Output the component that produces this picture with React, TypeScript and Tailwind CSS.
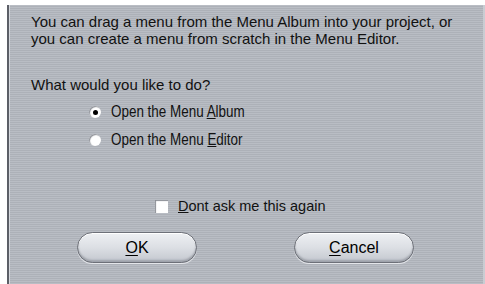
import React from "react";

const stripes =
  "bg-[repeating-linear-gradient(180deg,#b9bdc4_0px,#b9bdc4_1px,#adb1b8_1px,#adb1b8_2px)]";

const Radio: React.FC<{ checked?: boolean }> = ({ checked }) => (
  <span className="w-[12px] h-[12px] rounded-full bg-white shadow-[inset_1px_1px_1px_#8a8d94] flex items-center justify-center">
    {checked && <span className="w-[5px] h-[5px] rounded-full bg-black" />}
  </span>
);

const PillButton: React.FC<{ hot: string; rest: string }> = ({ hot, rest }) => (
  <button className="w-[120px] h-[31px] rounded-full border border-[#6d7078] bg-gradient-to-b from-[#eef0f3] via-[#dcdfe4] to-[#c3c7ce] shadow-[inset_0_1px_0_#ffffff,inset_0_-2px_2px_#9ea2aa,0_1px_0_#e4e6ea] text-[16px] text-black">
    <span className="underline underline-offset-2">{hot}</span>
    {rest}
  </button>
);

export default function App() {
  return (
    <div className="w-[485px] h-[284px] bg-white pt-[5px] pl-[7px] flex font-['Liberation_Sans',Arial,sans-serif]">
      <div
        className={`flex-1 border-l-2 border-[#5c5f67] shadow-[inset_1px_0_0_#d6d9de,inset_-2px_0_0_#c9ccd2] ${stripes} text-[15px] leading-[17px] text-[#111]`}
      >
        <div className="pl-[22px] pt-[8px]">
          <p>You can drag a menu from the Menu Album into your project, or</p>
          <p>you can create a menu from scratch in the Menu Editor.</p>
          <p className="mt-[29px]">What would you like to do?</p>
        </div>

        <div className="pl-[80px] mt-[10px] flex flex-col gap-[10px] text-[16px] leading-[18px]">
          <label className="flex items-center gap-[10px]">
            <Radio checked />
            <span className="inline-block origin-left scale-x-[0.84] whitespace-nowrap">
              Open the Menu <span className="underline">A</span>lbum
            </span>
          </label>
          <label className="flex items-center gap-[10px]">
            <Radio />
            <span className="inline-block origin-left scale-x-[0.84] whitespace-nowrap">
              Open the Menu <span className="underline">E</span>ditor
            </span>
          </label>
        </div>

        <label className="ml-[146px] mt-[49px] flex items-center gap-[10px] text-[14.5px] leading-[17px]">
          <span className="w-[13px] h-[13px] bg-white shadow-[inset_1px_1px_1px_#8a8d94]" />
          <span>
            <span className="underline">D</span>ont ask me this again
          </span>
        </label>

        <div className="mt-[17px] pl-[68px] flex gap-[97px]">
          <PillButton hot="O" rest="K" />
          <PillButton hot="C" rest="ancel" />
        </div>
      </div>
    </div>
  );
}
